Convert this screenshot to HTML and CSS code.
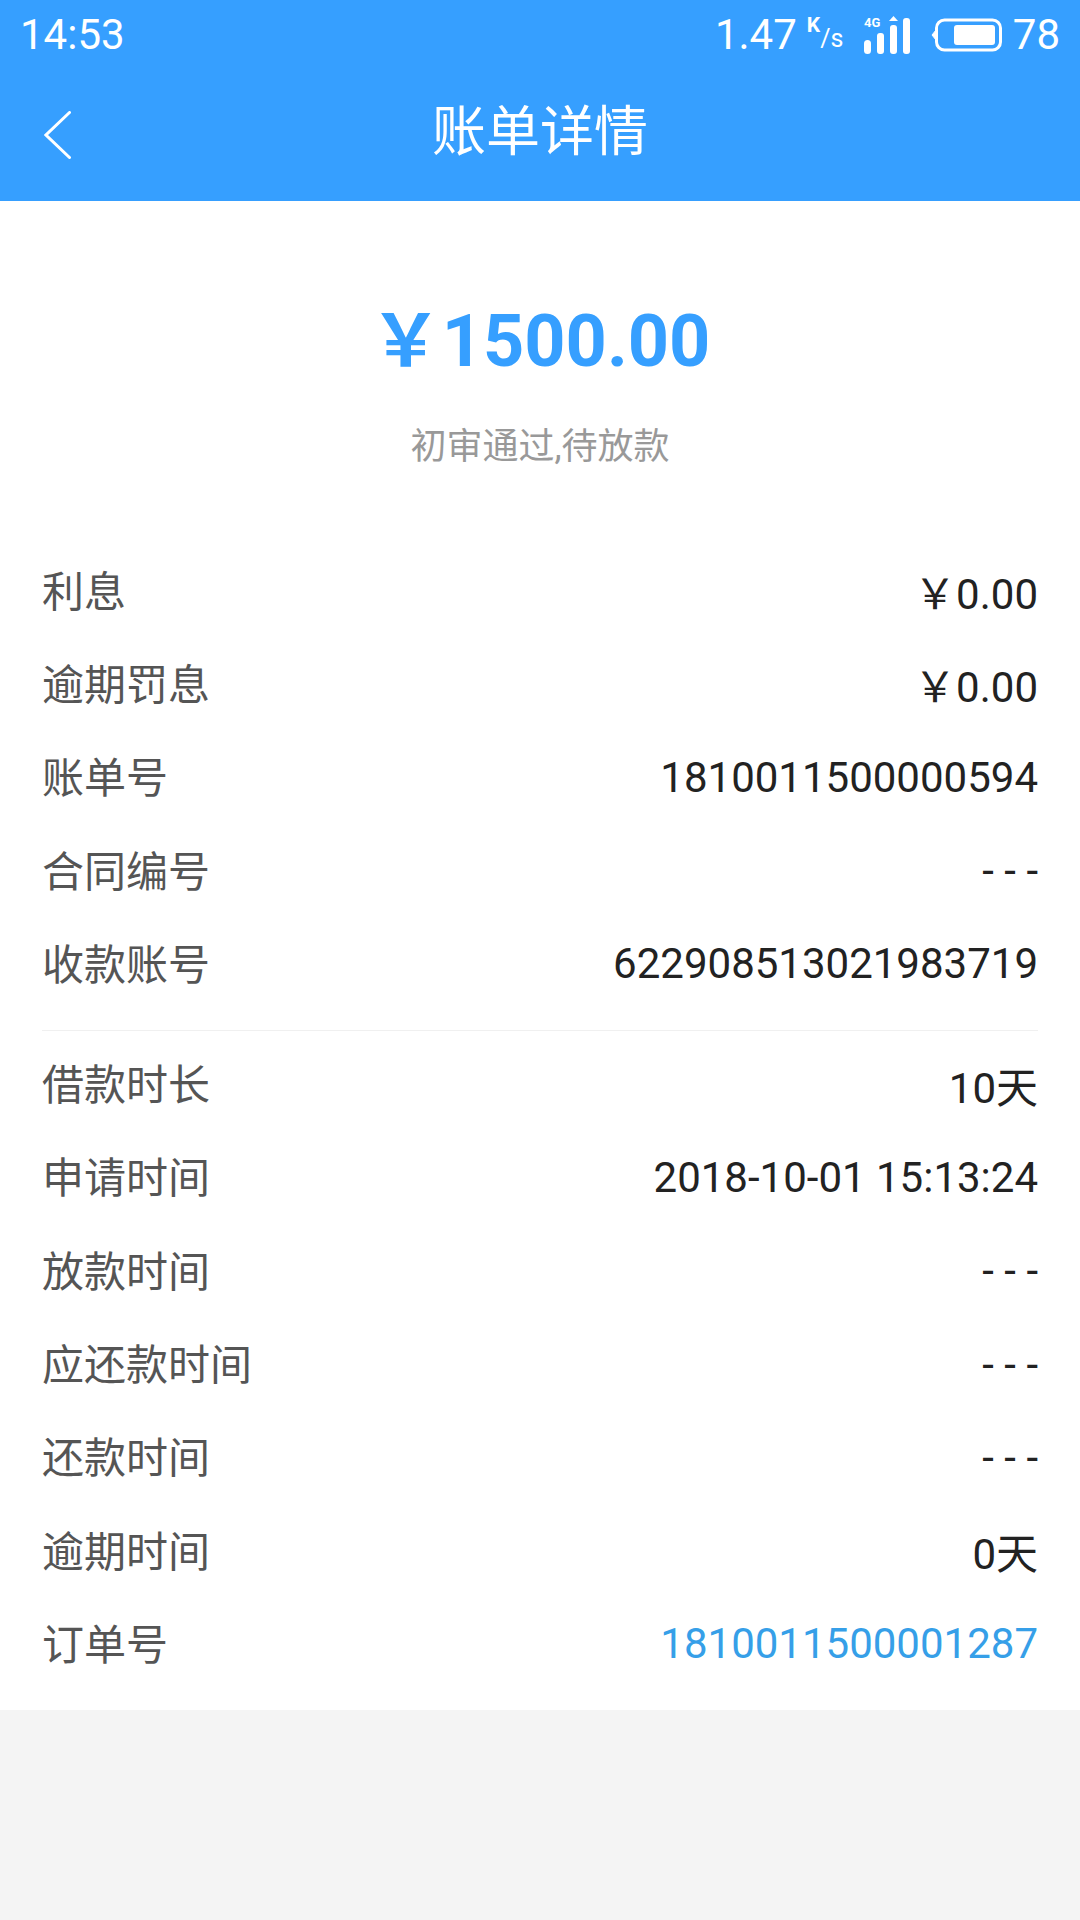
FILE: index.html
```html
<!DOCTYPE html>
<html>
<head>
    <title>账单详情</title>
    <link rel="stylesheet" href="styles.css">
</head>
<body>
    <div class="header">
        <div class="statusbar">
            <span class="time">14:53</span>
            <div class="status-right">
                <span class="speed">1.47</span>
                <span class="speed-unit"><span class="unit-k">K</span><span class="unit-s">/s</span></span>
                <!-- 信号 -->
                <svg class="signal" width="48" height="38" viewBox="0 0 48 38">
                    <text x="0" y="11" font-size="13" font-weight="700" fill="#fff" font-family="Roboto, sans-serif">4G</text>
                    <rect x="0" y="24" width="7" height="14" rx="3.5" fill="#fff"/>
                    <rect x="13" y="17" width="7" height="21" rx="3" fill="#fff"/>
                    <rect x="26" y="9" width="7" height="29" rx="3" fill="#fff"/>
                    <path d="M29.5 0 L34 5 L25 5 Z" fill="#fff"/>
                    <rect x="39" y="2" width="7" height="36" rx="3" fill="#fff"/>
                </svg>
                <!-- 电池 -->
                <svg class="battery" width="72" height="34" viewBox="0 0 72 34">
                    <path d="M5 12 L1 17 L5 22 Z" fill="#fff" stroke="#fff" stroke-width="1"/>
                    <rect x="5.5" y="2" width="64" height="30" rx="8" fill="none" stroke="#fff" stroke-width="3"/>
                    <rect x="23" y="7" width="41" height="20" rx="3" fill="#fff"/>
                </svg>
                <span class="level">78</span>
            </div>
        </div>
        <div class="toolbar">
            <svg class="back" width="27" height="48" viewBox="0 0 27 48">
                <path d="M25.500 1.500 L2 24 L25.500 46.500" fill="none" stroke="#fff" stroke-width="3" stroke-linecap="round"/>
            </svg>
            <span class="title">账单详情</span>
        </div>
    </div>

    <div class="content">
        <div class="summary">
            <div class="amount"><span class="yen">￥</span>1500.00</div>
            <div class="state">初审通过,待放款</div>
        </div>

        <div class="group">
            <div class="row"><span class="label">利息</span><span class="value">￥0.00</span></div>
            <div class="row"><span class="label">逾期罚息</span><span class="value">￥0.00</span></div>
            <div class="row"><span class="label">账单号</span><span class="value">1810011500000594</span></div>
            <div class="row"><span class="label">合同编号</span><span class="value">- - -</span></div>
            <div class="row"><span class="label">收款账号</span><span class="value">622908513021983719</span></div>
        </div>

        <div class="group group-last">
            <div class="row"><span class="label">借款时长</span><span class="value">10天</span></div>
            <div class="row"><span class="label">申请时间</span><span class="value">2018-10-01 15:13:24</span></div>
            <div class="row"><span class="label">放款时间</span><span class="value">- - -</span></div>
            <div class="row"><span class="label">应还款时间</span><span class="value">- - -</span></div>
            <div class="row"><span class="label">还款时间</span><span class="value">- - -</span></div>
            <div class="row"><span class="label">逾期时间</span><span class="value">0天</span></div>
            <div class="row"><span class="label">订单号</span><span class="value link">1810011500001287</span></div>
        </div>
    </div>
</body>
</html>
```

FILE: styles.css
```css
body {
    margin: 0;
    width: 1080px;
    height: 1920px;
    background-color: #f4f4f4;
    font-family: Roboto, "Noto Sans CJK SC", sans-serif;
    overflow: hidden;
}
.header {
    height: 201px;
    background-color: #369fff;
    color: white;
}
.statusbar {
    height: 69px;
    padding: 0 20px;
    display: flex;
    justify-content: space-between;
    align-items: center;
    font-size: 42px;
}
.status-right {
    display: flex;
    align-items: center;
}
.speed-unit {
    display: flex;
    width: 36px;
    height: 32px;
    margin: 0 21px 0 10px;
}
.unit-k {
    font-size: 21px;
    font-weight: 700;
    line-height: 18px;
    margin-top: -3px;
}
.unit-s {
    font-size: 25px;
    line-height: 24px;
    margin-top: 8px;
}
.signal {
    margin-right: 19px;
}
.battery {
    margin-right: 10px;
}
.toolbar {
    height: 116px;
    display: flex;
    align-items: center;
    justify-content: center;
    position: relative;
}
.back {
    position: absolute;
    left: 44px;
    top: 42px;
}
.title {
    font-size: 54px;
}
.content {
    background: white;
    height: 1509px;
    padding: 0 42px;
    box-sizing: border-box;
}
.summary {
    height: 340.5px;
    text-align: center;
    padding-top: 95.5px;
    box-sizing: border-box;
}
.amount {
    color: #369fff;
    font-size: 72px;
    font-weight: 700;
    line-height: 90px;
}
.state {
    color: #999;
    font-size: 36px;
    line-height: 50px;
    margin-top: 35px;
}
.group {
    border-bottom: 1px solid #f0f0f0;
    padding-bottom: 22px;
    margin-bottom: 4px;
}
.group-last {
    border-bottom: none;
}
.row {
    height: 93.3px;
    display: flex;
    justify-content: space-between;
    align-items: center;
    font-size: 42px;
}
.label {
    color: #555;
}
.value {
    color: #222;
    padding-top: 5px;
}
.link {
    color: #369fe8;
}
```
